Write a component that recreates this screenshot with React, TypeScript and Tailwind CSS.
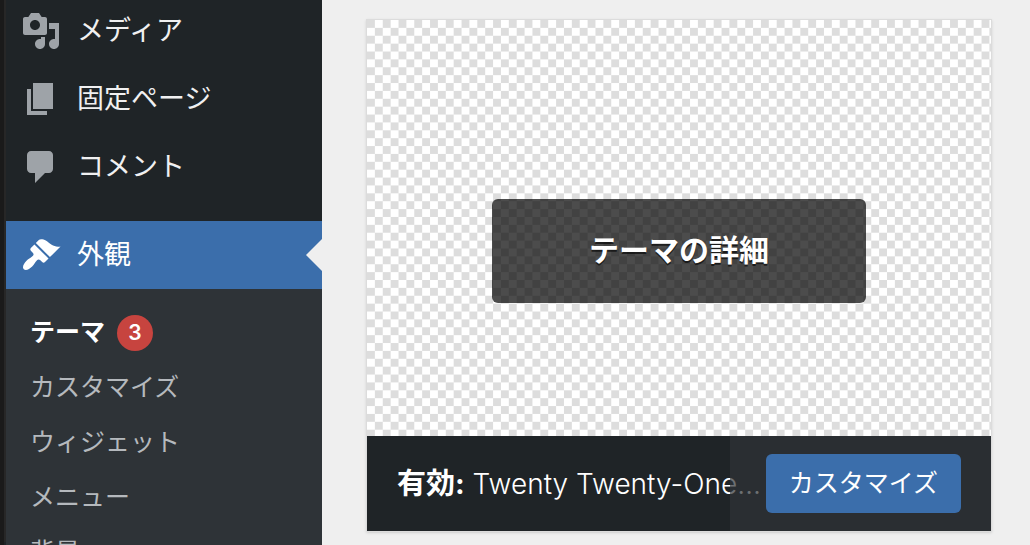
import type { ReactNode } from "react"

const topItems = [
  {
    label: "メディア",
    path: "M13 11V4c0-.55-.45-1-1-1h-1.67L9 1H5L3.67 3H2c-.55 0-1 .45-1 1v7c0 .55.45 1 1 1h10c.55 0 1-.45 1-1zM7 4.5c1.38 0 2.5 1.12 2.5 2.5S8.38 9.5 7 9.5 4.5 8.38 4.5 7 5.62 4.5 7 4.5zM14 6h5v10.5c0 1.38-1.12 2.5-2.5 2.5S14 17.88 14 16.5s1.12-2.5 2.5-2.5c.17 0 .34.02.5.05V9h-3V6zm-4 8.05V13h2v3.5c0 1.38-1.12 2.5-2.5 2.5S7 17.88 7 16.5 8.12 14 9.5 14c.17 0 .34.02.5.05z",
  },
  { label: "固定ページ", path: "M6 15V2h10v13H6zm-1 1h8v2H3V5h2v11z" },
  {
    label: "コメント",
    path: "M5 2h9c1.1 0 2 .9 2 2v7c0 1.1-.9 2-2 2h-2l-5 5v-5H5c-1.1 0-2-.9-2-2V4c0-1.1.9-2 2-2z",
  },
]

const brushPath =
  "M14.48 11.06L7.41 3.99l1.5-1.5c.5-.56 2.3-.47 3.51.32 1.21.8 1.43 1.28 2.91 2.1 1.18.64 2.45 1.26 4.45.85zm-.71.71L6.7 4.7 4.93 6.47c-.39.39-.39 1.02 0 1.41l1.06 1.06c.39.39.39 1.03 0 1.42-.6.6-1.43 1.11-2.21 1.69-.35.26-.7.53-1.01.84C1.43 14.23.4 16.08 1.4 17.07c.99 1 2.84-.03 4.18-1.36.31-.31.58-.66.85-1.02.57-.78 1.08-1.61 1.69-2.21.39-.39 1.02-.39 1.41 0l1.06 1.06c.39.39 1.02.39 1.41 0z"

const subItems = ["カスタマイズ", "ウィジェット", "メニュー", "背景"]

function MenuLink({ path, active, children }: { path: string; active?: boolean; children: ReactNode }) {
  return (
    <a href="#" aria-current={active ? "true" : undefined}
       className={`relative flex h-17 items-center gap-4 pl-[15px] text-[27px] ${active ? "bg-[#3b6eab] text-white" : "text-[#f0f0f1]"}`}>
      <svg viewBox="0 0 20 20" className={`size-10 shrink-0 ${active ? "fill-white" : "fill-[#9ea3a8]"}`} aria-hidden="true">
        <path fillRule="evenodd" d={path} />
      </svg>
      <span>{children}</span>
      {active && <span className="absolute right-0 top-1/2 -translate-y-1/2 border-y-16 border-r-16 border-y-transparent border-r-[#efefef]" />}
    </a>
  )
}

// chequered placeholder behind themes without a screenshot
function Checkerboard() {
  return (
    <svg viewBox="0 0 792 528" preserveAspectRatio="xMinYMin slice" className="block size-full" aria-hidden="true">
      <defs>
        <pattern id="checker" width="20" height="20" patternUnits="userSpaceOnUse">
          <path d="M0 0h10v10H0zM10 10h10v10H10z" fill="#dddddd" />
        </pattern>
      </defs>
      <rect width="792" height="528" fill="#fff" />
      <rect width="792" height="528" fill="url(#checker)" />
    </svg>
  )
}

export default function App() {
  return (
    <div className="flex h-screen overflow-hidden bg-[#efefef] font-[Inter,'Noto_Sans_CJK_JP',sans-serif]">
      <nav className="w-[322px] shrink-0 border-l-4 border-[#1a1a1a] bg-[#1f2427]">
        <div className="h-full border-l-2 border-[#272727]">
          <ul className="-mt-[3px] pb-5">
            {topItems.map(item => (
              <li key={item.label}><MenuLink path={item.path}>{item.label}</MenuLink></li>
            ))}
          </ul>
          <MenuLink path={brushPath} active>外観</MenuLink>
          <ul className="bg-[#2e3337] pt-4 pl-6 text-[25px] text-[#b5b9bd]">
            <li>
              <a href="#" className="flex h-[55px] items-center gap-3 font-bold text-white">
                テーマ
                <span className="flex size-9 items-center justify-center rounded-full bg-[#c7443f] text-[21px] font-semibold">3</span>
              </a>
            </li>
            {subItems.map(label => (
              <li key={label}><a href="#" className="flex h-[55px] items-center">{label}</a></li>
            ))}
          </ul>
        </div>
      </nav>

      <main className="min-w-0 flex-1 pt-[19px] pr-[38px] pl-11">
        <article className="border border-[#dcdcdc] shadow-sm">
          <div className="relative aspect-[3/2]">
            <Checkerboard />
            <button type="button"
                    className="absolute top-[43%] left-[20%] h-26 w-[60%] rounded-md bg-black/70 text-[30px] font-bold text-white text-shadow-[0_2px_0_rgb(0_0_0/0.6)]">
              テーマの詳細
            </button>
          </div>
          <div className="relative flex h-[95px] items-center bg-[#1f2427] pr-[226px] pl-[30px] text-white">
            <h2 className="truncate text-[28px] font-light">
              <strong className="text-[29px] font-bold">有効:</strong> Twenty Twenty-One Theme
            </h2>
            <div className="absolute inset-y-0 right-0 flex items-center bg-[#2f3338]/70 pr-[30px] pl-9">
              <a href="#" className="flex h-[59px] items-center rounded-md bg-[#3b6eab] px-[23px] text-[25px] text-white">カスタマイズ</a>
            </div>
          </div>
        </article>
      </main>
    </div>
  )
}
